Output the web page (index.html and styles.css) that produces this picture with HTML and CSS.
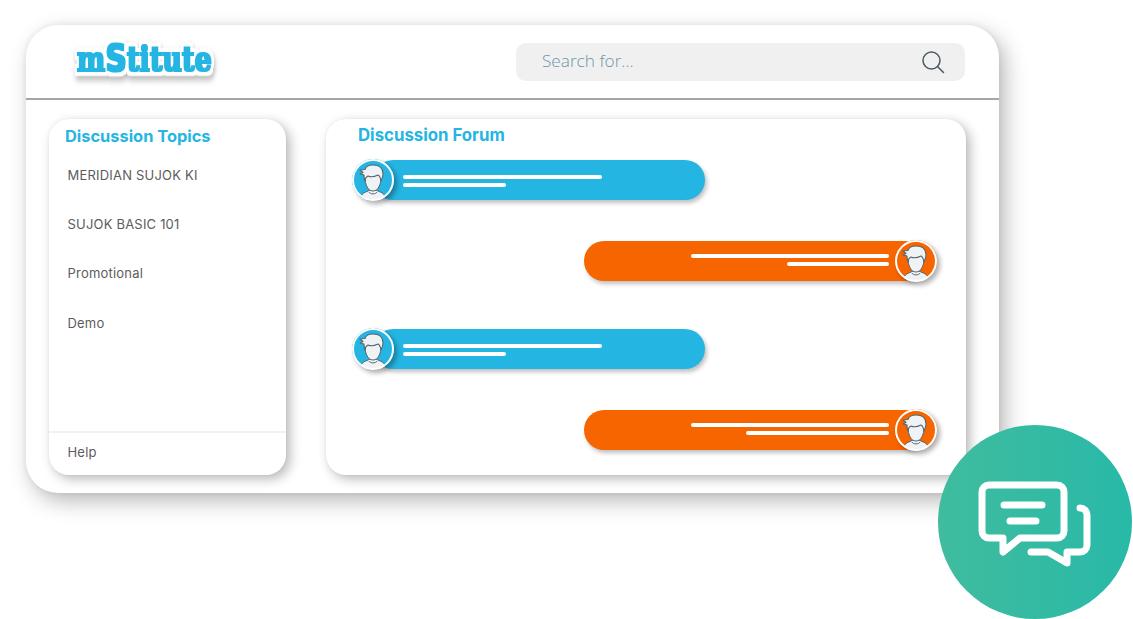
FILE: index.html
```html
<!DOCTYPE html>
<html lang="en">
<head>
<meta charset="utf-8">
<title>mStitute Discussion Forum</title>
<link rel="stylesheet" href="styles.css">
</head>
<body>
<svg class="defs" width="0" height="0" aria-hidden="true">
  <filter id="logo-fx" x="-10%" y="-30%" width="120%" height="170%" color-interpolation-filters="sRGB">
    <feMorphology in="SourceAlpha" operator="dilate" radius="0.6" result="fat"/>
    <feFlood flood-color="#25b5e2"/>
    <feComposite in2="fat" operator="in" result="fatBlue"/>
    <feMorphology in="SourceAlpha" operator="dilate" radius="3" result="halo"/>
    <feGaussianBlur in="halo" stdDeviation="0.8" result="haloBlur"/>
    <feComponentTransfer in="haloBlur" result="haloSoft"><feFuncA type="linear" slope="2.500"/></feComponentTransfer>
    <feOffset in="haloSoft" dx="1" dy="3" result="off"/>
    <feGaussianBlur in="off" stdDeviation="2.500" result="blur"/>
    <feFlood flood-color="#000" flood-opacity=".28"/>
    <feComposite in2="blur" operator="in" result="shadow"/>
    <feFlood flood-color="#fff"/>
    <feComposite in2="haloSoft" operator="in" result="white"/>
    <feMerge>
      <feMergeNode in="shadow"/>
      <feMergeNode in="white"/>
      <feMergeNode in="fatBlue"/>
    </feMerge>
  </filter>
  <symbol id="person" viewBox="0 0 42 42">
    <path d="M8 42c.5-5 2-8 7-9.500l3-1.500h6l3 1.500c5 1.500 6.500 4.500 7 9.500z" fill="#eff3f5" stroke="#56666f" stroke-width="1"/>
    <path d="M17 33c1 2.500 7 2.500 8 0" fill="none" stroke="#56666f" stroke-width="1"/>
    <path d="M13 18c0 8 3 14 8 14s8-6 8-14c0-3-2-6-8-6s-8 3-8 6z" fill="#eff3f5" stroke="#56666f" stroke-width="1"/>
    <path d="M13 22c-1-2-1-4-1-6l-4-1 3-1.500-3-2.500 5-.5C14 7 17 6 21 6c6 0 10 3 10 9 0 3-1 5-2 7-.5-3-1-5-3-6-4 2-8 2-10 1-2 1-3 3-3 5z" fill="#eff3f5" stroke="#56666f" stroke-width="1.100" stroke-linejoin="round"/>
  </symbol>
</svg>
<div class="window">
  <header class="topbar">
    <div class="logo">m<span class="logo-s">S</span>titute</div>
    <div class="search">
      <span class="search-text">Search for...</span>
      <svg class="search-icon" width="24" height="24" viewBox="0 0 24 24" fill="none" stroke="#4d5b63" stroke-width="1.500" stroke-linecap="round"><circle cx="10.500" cy="10.500" r="8.500"/><path d="M16.500 16.500l6 6"/></svg>
    </div>
  </header>
  <div class="content">
    <aside class="sidebar">
      <h2 class="side-title">Discussion Topics</h2>
      <ul class="topics">
        <li>MERIDIAN SUJOK KI</li>
        <li>SUJOK BASIC 101</li>
        <li>Promotional</li>
        <li>Demo</li>
      </ul>
      <div class="help">Help</div>
    </aside>
    <main class="forum">
      <h2 class="forum-title">Discussion Forum</h2>
      <div class="msg msg-in first">
        <svg class="avatar av-blue" width="42" height="42"><use href="#person"/></svg>
        <div class="bubble blue"><i class="line l198"></i><i class="line l102"></i></div>
      </div>
      <div class="msg msg-out">
        <div class="bubble orange"><i class="line l198"></i><i class="line l102"></i></div>
        <svg class="avatar av-orange" width="42" height="42"><use href="#person"/></svg>
      </div>
      <div class="msg msg-in third">
        <svg class="avatar av-blue" width="42" height="42"><use href="#person"/></svg>
        <div class="bubble blue"><i class="line l198"></i><i class="line l102"></i></div>
      </div>
      <div class="msg msg-out">
        <div class="bubble orange"><i class="line l198"></i><i class="line l142"></i></div>
        <svg class="avatar av-orange" width="42" height="42"><use href="#person"/></svg>
      </div>
    </main>
  </div>
</div>
<svg class="chat-badge" width="194" height="194" viewBox="8 5 194 194" fill="none" stroke="#fff" stroke-width="7" stroke-linecap="round" stroke-linejoin="round">
  <defs>
    <linearGradient id="teal" x1="0" x2="1" y1="0" y2="0"><stop offset="0" stop-color="#40bc9e"/><stop offset="1" stop-color="#28b9a8"/></linearGradient>
  </defs>
  <circle cx="105" cy="102" r="97" fill="url(#teal)" stroke="none"/>
  <path d="M59 65h68a7 7 0 0 1 7 7v39a7 7 0 0 1-7 7H90l-17 14v-14H59a7 7 0 0 1-7-7V72a7 7 0 0 1 7-7z"/>
  <path d="M74 85h38M80 101h26"/>
  <path d="M150 88a7 7 0 0 1 7 7v30a7 7 0 0 1-7 7h-13v11l-19-11h-17"/>
</svg>
</body>
</html>
```
FILE: styles.css
```css
* { box-sizing: border-box; }
html, body { margin: 0; height: 100%; overflow: hidden; background: #fff; }
body { padding: 25px 0 0 26px; font-family: "Inter", "Liberation Sans", sans-serif; position: relative; }
.defs { position: absolute; }

.window {
  width: 973px; height: 468px; background: #fff; border-radius: 32px;
  box-shadow: 6px 8px 22px rgba(0,0,0,.28), 0 0 6px rgba(0,0,0,.07);
  display: flex; flex-direction: column;
}
.topbar {
  height: 75px; flex: none; border-bottom: 2px solid #a6a6a6;
  display: flex; align-items: flex-start; justify-content: space-between;
  padding: 18px 34px 0 51px;
}
.logo {
  font-family: "DejaVu Serif", serif; font-weight: 700; font-size: 28px; line-height: 37px;
  letter-spacing: .3px; color: #25b5e2;
  transform: scale(.95, 1.18); transform-origin: left 72%;
  filter: url(#logo-fx);
}
.logo-s { font-size: 31px; line-height: 30px; font-family: "DejaVu Sans", sans-serif; }
.search {
  width: 449px; height: 38px; background: #f0f0f0; border-radius: 10px;
  display: flex; align-items: center; justify-content: space-between; padding: 0 20px 0 26px;
}
.search-text { font-family: "Open Sans", sans-serif; font-weight: 300; font-size: 17.200px; line-height: 36px; padding-bottom: 2px; color: #6f95aa; }

.content { flex: 1; display: flex; gap: 40px; padding: 19px 33px 18px 23px; min-height: 0; }
.sidebar, .forum {
  background: #fff; border-radius: 20px;
  box-shadow: 4px 4px 12px rgba(0,0,0,.28), 0 0 3px rgba(0,0,0,.05);
}
.sidebar { width: 237px; display: flex; flex-direction: column; }
.side-title, .forum-title { margin: 0; color: #25b5e2; font-weight: 700; line-height: 20px; }
.side-title { padding: 7px 0 0 16px; font-size: 16.400px; }
.forum-title { padding-left: 6px; font-size: 16.800px; }
.topics { list-style: none; margin: 0; padding: 0 0 0 18.500px; flex: 1; }
.topics li { font-size: 13px; letter-spacing: .2px; line-height: 16px; color: #5c5c5c; font-weight: 400; margin-top: 33px; }
.topics li:first-child { margin-top: 21px; }
.topics li:last-child { margin-top: 34px; }
.help {
  border-top: 2px solid #f1f1f1; height: 44px; padding: 11px 0 0 18.500px;
  font-size: 13px; letter-spacing: .2px; line-height: 16px; color: #5c5c5c; font-weight: 400;
}

.forum { flex: 1; padding: 6px 29px 0 26px; display: flex; flex-direction: column; }
.msg { display: flex; align-items: center; height: 42px; }
.msg-in { justify-content: flex-start; }
.msg-out { justify-content: flex-end; margin-top: 39px; }
.first { margin-top: 14px; }
.third { margin-top: 46px; }
.bubble {
  height: 40px; border-radius: 20px; display: flex; flex-direction: column; justify-content: center;
  gap: 4px; flex: none; box-shadow: 2px 3px 4px rgba(0,0,0,.25);
}
.blue { background: #25b5e2; width: 332px; margin-left: -21px; padding: 1px 0 0 30px; align-items: flex-start; }
.orange { background: #f66500; width: 341px; margin-right: -30px; padding: 0 36px 2px 0; align-items: flex-end; }
.line { display: block; height: 4px; background: #fff; border-radius: 2px; }
.l198 { width: 198.500px; }
.l102 { width: 102.500px; }
.l142 { width: 143px; }
.avatar {
  position: relative; z-index: 1; flex: none; border-radius: 50%; overflow: hidden;
  outline: 2px solid #fff; outline-offset: -2px; box-shadow: 3px 3px 5px rgba(0,0,0,.32);
}
.av-blue { background: #25b5e2; }
.av-orange { background: #f66500; }

.chat-badge { position: absolute; left: 938px; top: 425px; }
```
